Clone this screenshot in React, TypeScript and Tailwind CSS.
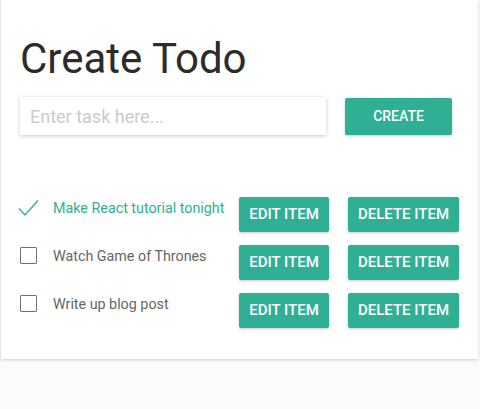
import { useState } from 'react';

type Todo = { id: number; text: string; done: boolean };

const INITIAL: Todo[] = [
  { id: 1, text: 'Make React tutorial tonight', done: true },
  { id: 2, text: 'Watch Game of Thrones', done: false },
  { id: 3, text: 'Write up blog post', done: false }
];

function Check({ done, onToggle }: { done: boolean; onToggle: () => void }): JSX.Element {
  if (done) {
    return (
      <button onClick={onToggle} className="relative w-[17px] h-[18px] mt-[2px] shrink-0">
        <svg
          className="absolute left-[-2px] top-0"
          width="21"
          height="18"
          viewBox="0 0 21 18"
          fill="none"
        >
          <path d="M1 9.5 L7 16 L20 1.5" stroke="#2fb094" strokeWidth="1.4" />
        </svg>
      </button>
    );
  }
  return (
    <button
      onClick={onToggle}
      className="w-[17px] h-[17px] mt-[2px] shrink-0 border-[1.5px] border-[#707070] rounded-[1px]"
    />
  );
}

export default function App(): JSX.Element {
  const [todos, setTodos] = useState<Todo[]>(INITIAL);
  const [task, setTask] = useState('');

  const toggle = (id: number): void => {
    setTodos(todos.map((t) => (t.id === id ? { ...t, done: !t.done } : t)));
  };

  const create = (): void => {
    if (!task.trim()) return;
    setTodos([...todos, { id: Date.now(), text: task, done: false }]);
    setTask('');
  };

  return (
    <div className="w-[480px] h-[409px] bg-[#fbfbfc] font-['Roboto',sans-serif] overflow-hidden">
      <div className="w-[478px] h-[359px] bg-white border-l border-[#e6e6e6] shadow-[0_1px_3px_rgba(0,0,0,0.18)]">
        <h1 className="pl-[19px] pt-[34px] text-[42px] leading-[50px] text-[#2b2b2b] font-normal">
          Create Todo
        </h1>
        <div className="flex items-center pl-[19px] mt-[13px]">
          <input
            value={task}
            onChange={(e) => setTask(e.target.value)}
            placeholder="Enter task here..."
            className="w-[306px] h-[38px] px-[10px] text-[18px] text-[#333] placeholder:text-[#cbcbcb] outline-none shadow-[0_1px_4px_rgba(0,0,0,0.22)]"
          />
          <button
            onClick={create}
            className="ml-[19px] w-[107px] h-[37px] bg-[#2fb094] text-white text-[14px] font-medium rounded-[2px] shadow-[0_1px_3px_rgba(0,0,0,0.2)]"
          >
            CREATE
          </button>
        </div>
        <ul className="mt-[62px] flex flex-col gap-[13px]">
          {todos.map((t) => (
            <li key={t.id} className="flex items-start pl-[19px]">
              <div className="w-[219px] flex items-start gap-[16px]">
                <Check done={t.done} onToggle={() => toggle(t.id)} />
                <span
                  className={
                    t.done
                      ? 'text-[14.3px] leading-[22px] text-[#2fb094]'
                      : 'text-[14.3px] leading-[22px] text-[#666]'
                  }
                >
                  {t.text}
                </span>
              </div>
              <button className="w-[90px] h-[35px] bg-[#2fb094] text-white text-[15px] font-medium rounded-[2px] shadow-[0_1px_3px_rgba(0,0,0,0.22)]">
                EDIT ITEM
              </button>
              <button className="ml-[19px] w-[111px] h-[35px] bg-[#2fb094] text-white text-[15px] font-medium rounded-[2px] shadow-[0_1px_3px_rgba(0,0,0,0.22)]">
                DELETE ITEM
              </button>
            </li>
          ))}
        </ul>
      </div>
    </div>
  );
}
